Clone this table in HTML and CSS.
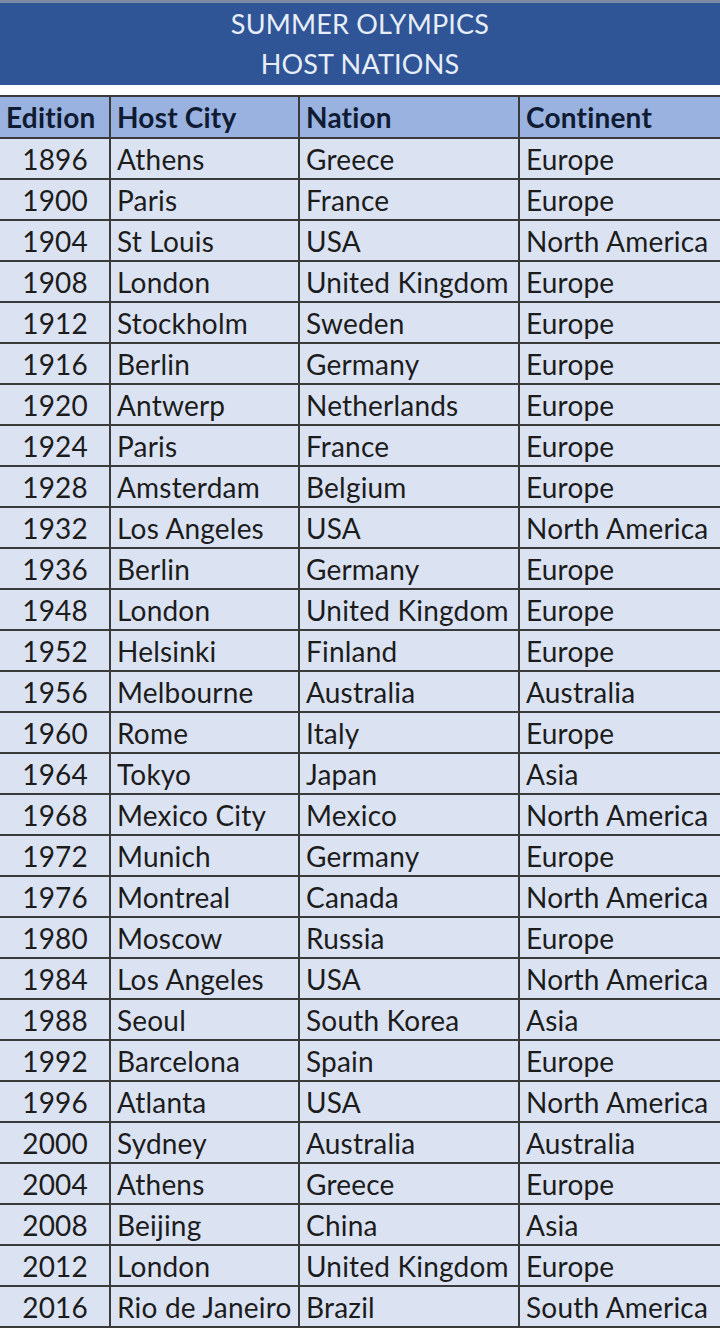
FILE: index.html
```html
<!DOCTYPE html>
<html>
<head>
<meta charset="utf-8">
<link rel="stylesheet" href="styles.css">
</head>
<body>
<div class="title">
  <div>SUMMER OLYMPICS</div>
  <div>HOST NATIONS</div>
</div>
<table class="hosts">
  <colgroup>
    <col class="c1"><col class="c2"><col class="c3"><col class="c4">
  </colgroup>
  <thead>
    <tr><th class="ed">Edition</th><th>Host City</th><th>Nation</th><th>Continent</th></tr>
  </thead>
  <tbody>
    <tr><td class="ed">1896</td><td>Athens</td><td>Greece</td><td>Europe</td></tr>
    <tr><td class="ed">1900</td><td>Paris</td><td>France</td><td>Europe</td></tr>
    <tr><td class="ed">1904</td><td>St Louis</td><td>USA</td><td>North America</td></tr>
    <tr><td class="ed">1908</td><td>London</td><td>United Kingdom</td><td>Europe</td></tr>
    <tr><td class="ed">1912</td><td>Stockholm</td><td>Sweden</td><td>Europe</td></tr>
    <tr><td class="ed">1916</td><td>Berlin</td><td>Germany</td><td>Europe</td></tr>
    <tr><td class="ed">1920</td><td>Antwerp</td><td>Netherlands</td><td>Europe</td></tr>
    <tr><td class="ed">1924</td><td>Paris</td><td>France</td><td>Europe</td></tr>
    <tr><td class="ed">1928</td><td>Amsterdam</td><td>Belgium</td><td>Europe</td></tr>
    <tr><td class="ed">1932</td><td>Los Angeles</td><td>USA</td><td>North America</td></tr>
    <tr><td class="ed">1936</td><td>Berlin</td><td>Germany</td><td>Europe</td></tr>
    <tr><td class="ed">1948</td><td>London</td><td>United Kingdom</td><td>Europe</td></tr>
    <tr><td class="ed">1952</td><td>Helsinki</td><td>Finland</td><td>Europe</td></tr>
    <tr><td class="ed">1956</td><td>Melbourne</td><td>Australia</td><td>Australia</td></tr>
    <tr><td class="ed">1960</td><td>Rome</td><td>Italy</td><td>Europe</td></tr>
    <tr><td class="ed">1964</td><td>Tokyo</td><td>Japan</td><td>Asia</td></tr>
    <tr><td class="ed">1968</td><td>Mexico City</td><td>Mexico</td><td>North America</td></tr>
    <tr><td class="ed">1972</td><td>Munich</td><td>Germany</td><td>Europe</td></tr>
    <tr><td class="ed">1976</td><td>Montreal</td><td>Canada</td><td>North America</td></tr>
    <tr><td class="ed">1980</td><td>Moscow</td><td>Russia</td><td>Europe</td></tr>
    <tr><td class="ed">1984</td><td>Los Angeles</td><td>USA</td><td>North America</td></tr>
    <tr><td class="ed">1988</td><td>Seoul</td><td>South Korea</td><td>Asia</td></tr>
    <tr><td class="ed">1992</td><td>Barcelona</td><td>Spain</td><td>Europe</td></tr>
    <tr><td class="ed">1996</td><td>Atlanta</td><td>USA</td><td>North America</td></tr>
    <tr><td class="ed">2000</td><td>Sydney</td><td>Australia</td><td>Australia</td></tr>
    <tr><td class="ed">2004</td><td>Athens</td><td>Greece</td><td>Europe</td></tr>
    <tr><td class="ed">2008</td><td>Beijing</td><td>China</td><td>Asia</td></tr>
    <tr><td class="ed">2012</td><td>London</td><td>United Kingdom</td><td>Europe</td></tr>
    <tr><td class="ed">2016</td><td>Rio de Janeiro</td><td>Brazil</td><td>South America</td></tr>
  </tbody>
</table>
</body>
</html>
```
FILE: styles.css
```css
html, body {
  margin: 0;
  padding: 0;
  background: #ffffff;
}
body {
  font-family: Lato, "Open Sans", sans-serif;
  width: 720px;
  overflow: hidden;
}
.title {
  border-top: 3px solid #7d8aa3;
  background: #2f5597;
  color: #e8eef8;
  height: 82px;
  display: flex;
  flex-direction: column;
  align-items: center;
  justify-content: center;
  font-size: 27px;
  line-height: 40px;
  letter-spacing: 0.2px;
}
.hosts {
  margin-top: 10px;
  width: 720px;
  border-collapse: collapse;
  table-layout: fixed;
  font-size: 28px;
  letter-spacing: 0.2px;
  color: #1c1c1c;
}
.c1 { width: 110px; }
.c2 { width: 189px; }
.c3 { width: 220px; }
.c4 { width: 201px; }
.hosts th, .hosts td {
  height: 39px;
  padding: 0 0 0 6px;
  border: 2px solid #3a3a3a;
  text-align: left;
  white-space: nowrap;
  overflow: hidden;
  vertical-align: middle;
}
.hosts th:first-child, .hosts td:first-child { border-left: none; }
.hosts th:last-child, .hosts td:last-child { border-right: none; }
.hosts th {
  background: #9ab2df;
  color: #0f1b33;
  font-weight: 700;
  height: 40px;
}
.hosts td {
  background: #dbe2f2;
}
.hosts td.ed {
  text-align: right;
  padding: 0 21px 0 0;
}
.hosts th.ed {
  text-align: left;
  padding: 0 0 0 6px;
}
```
